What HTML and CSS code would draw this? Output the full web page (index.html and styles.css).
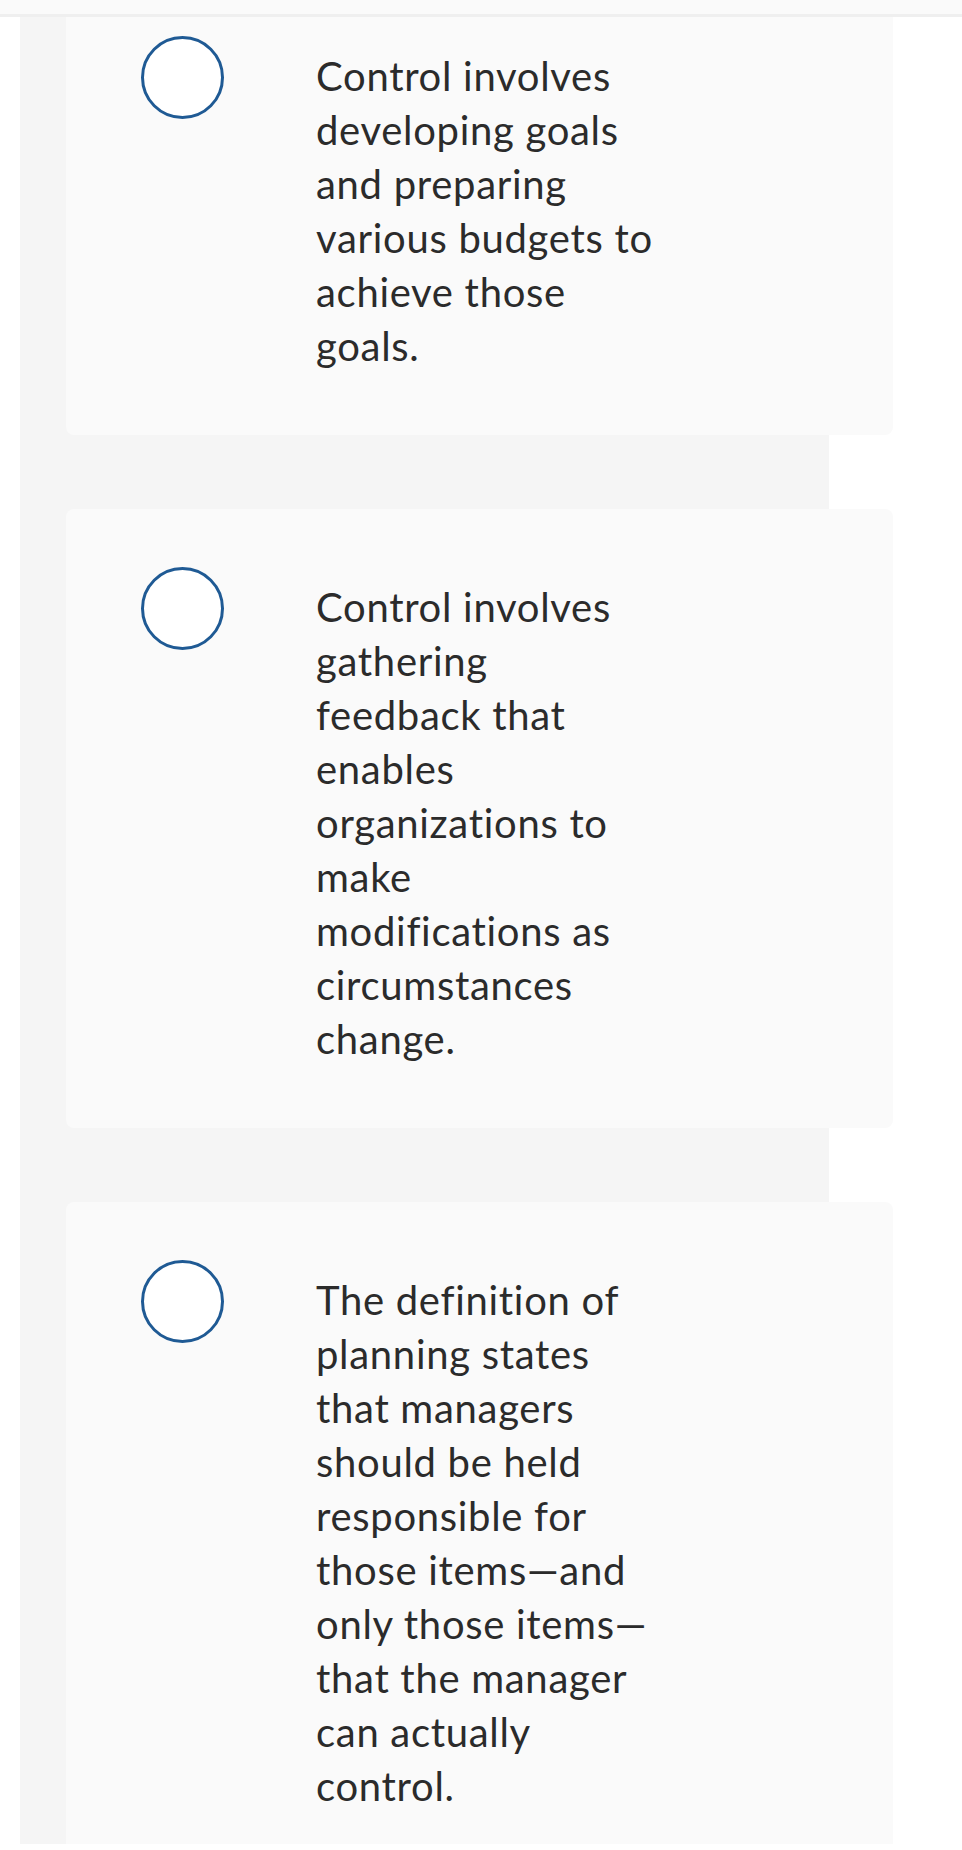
FILE: index.html
```html
<!DOCTYPE html>
<html lang="en">
<head>
    <meta charset="UTF-8">
    <meta name="viewport" content="width=device-width, initial-scale=1.0">
    <title>Question</title>
    <link rel="stylesheet" href="styles.css">
</head>
<body>
    <div class="topbar"></div>
    <div class="page">
        <div class="choices">
            <label class="choice first">
                <span class="radio"></span>
                <span class="choice-text">Control involves developing goals and preparing various budgets to achieve those goals.</span>
            </label>
            <label class="choice">
                <span class="radio"></span>
                <span class="choice-text">Control involves gathering feedback that enables organizations to make modifications as circumstances change.</span>
            </label>
            <label class="choice">
                <span class="radio"></span>
                <span class="choice-text">The definition of planning states that managers should be held responsible for those items&mdash;and only those items&mdash;that the manager can actually control.</span>
            </label>
        </div>
    </div>
</body>
</html>
```

FILE: styles.css
```css
body {
    margin: 0;
    background-color: #ffffff;
    font-family: Lato, "Open Sans", sans-serif;
    color: #2b2b2b;
}

.topbar {
    height: 14px;
    background-color: #fafafa;
    border-bottom: 3px solid #efefef;
}

.page {
    height: 1827px; /* page is cut at the bottom of the view */
    overflow: hidden;
    padding-left: 20px;
}

.choices {
    width: 763px;
    padding-left: 46px;
    background-color: #f5f5f5;
    height: 100%;
    display: flex;
    flex-direction: column;
    gap: 74px;
}

.choice {
    display: flex;
    align-items: flex-start;
    width: 827px;
    flex-shrink: 0;
    box-sizing: border-box;
    padding: 58px 0 62px 75px;
    background-color: #fafafa;
    border-radius: 8px;
    cursor: pointer;
}

/* first card is scrolled under the top bar */
.choice.first {
    padding-top: 19px;
    border-top-left-radius: 0;
    border-top-right-radius: 0;
}

.radio {
    width: 83px;
    height: 83px;
    flex-shrink: 0;
    box-sizing: border-box;
    border: 3px solid #1f5a94;
    border-radius: 50%;
    background-color: #ffffff;
    margin-right: 92px;
}

.choice-text {
    width: 342px;
    padding-top: 13px;
    font-size: 40px;
    line-height: 54px;
    letter-spacing: 0.7px;
    font-variant-ligatures: none;
}
```
